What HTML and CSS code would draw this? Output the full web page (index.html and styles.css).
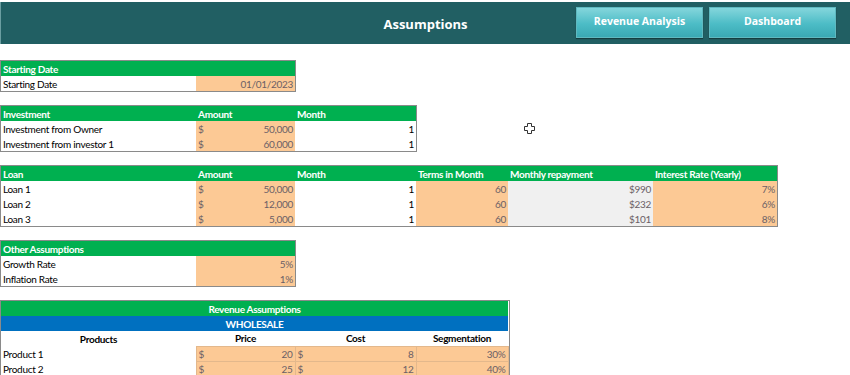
FILE: index.html
```html
<!DOCTYPE html>
<html lang="en">
<head>
  <meta charset="UTF-8" />
  <title>Assumptions</title>
  <link rel="stylesheet" href="styles.css">
</head>
<body>
  <header class="topbar">
    <div class="topbar-spacer"></div>
    <h1 class="title">Assumptions</h1>
    <nav class="nav">
      <a class="nav-btn" href="#">Revenue Analysis</a>
      <a class="nav-btn" href="#">Dashboard</a>
    </nav>
  </header>

  <main class="sheet">
    <!-- Starting date -->
    <table class="grid w-295">
      <colgroup><col class="c-label"><col class="c-amount"></colgroup>
      <tr class="head"><th colspan="2">Starting Date</th></tr>
      <tr><td>Starting Date</td><td class="input num">01/01/2023</td></tr>
    </table>

    <!-- Investment -->
    <table class="grid w-416">
      <colgroup><col class="c-label"><col class="c-amount"><col class="c-month"></colgroup>
      <tr class="head"><th>Investment</th><th>Amount</th><th>Month</th></tr>
      <tr><td>Investment from Owner</td><td class="input"><span class="acc"><span>$</span><span>50,000</span></span></td><td class="num">1</td></tr>
      <tr><td>Investment from investor 1</td><td class="input"><span class="acc"><span>$</span><span>60,000</span></span></td><td class="num">1</td></tr>
    </table>

    <!-- Loan -->
    <table class="grid w-777">
      <colgroup><col class="c-label"><col class="c-amount"><col class="c-month"><col class="c-terms"><col class="c-repay"><col class="c-rate"></colgroup>
      <tr class="head"><th>Loan</th><th>Amount</th><th>Month</th><th>Terms in Month</th><th>Monthly repayment</th><th>Interest Rate (Yearly)</th></tr>
      <tr><td>Loan 1</td><td class="input"><span class="acc"><span>$</span><span>50,000</span></span></td><td class="num">1</td><td class="input num">60</td><td class="calc num">$990</td><td class="input num">7%</td></tr>
      <tr><td>Loan 2</td><td class="input"><span class="acc"><span>$</span><span>12,000</span></span></td><td class="num">1</td><td class="input num">60</td><td class="calc num">$232</td><td class="input num">6%</td></tr>
      <tr><td>Loan 3</td><td class="input"><span class="acc"><span>$</span><span>5,000</span></span></td><td class="num">1</td><td class="input num">60</td><td class="calc num">$101</td><td class="input num">8%</td></tr>
    </table>

    <!-- Other assumptions -->
    <table class="grid w-295">
      <colgroup><col class="c-label"><col class="c-amount"></colgroup>
      <tr class="head"><th colspan="2">Other Assumptions</th></tr>
      <tr><td>Growth Rate</td><td class="input num">5%</td></tr>
      <tr><td>Inflation Rate</td><td class="input num">1%</td></tr>
    </table>

    <!-- Revenue assumptions -->
    <table class="grid w-508 revenue">
      <colgroup><col class="c-label"><col class="c-amount"><col class="c-month"><col class="c-terms"></colgroup>
      <tr class="head center"><th colspan="4">Revenue Assumptions</th></tr>
      <tr class="band"><th colspan="4">WHOLESALE</th></tr>
      <tr class="subhead"><th>Products</th><th>Price</th><th>Cost</th><th>Segmentation</th></tr>
      <tr><td>Product 1</td><td class="input"><span class="acc"><span>$</span><span>20</span></span></td><td class="input"><span class="acc"><span>$</span><span>8</span></span></td><td class="input num">30%</td></tr>
      <tr><td>Product 2</td><td class="input"><span class="acc"><span>$</span><span>25</span></span></td><td class="input"><span class="acc"><span>$</span><span>12</span></span></td><td class="input num">40%</td></tr>
    </table>

    <!-- excel cell cursor -->
    <svg class="cell-cursor" width="11" height="11" viewBox="0 0 11 11">
      <path d="M3.5 0.5h4v3h3v4h-3v3h-4v-3h-3v-4h3z" fill="#fff" stroke="#333" stroke-width="1"/>
    </svg>
  </main>
</body>
</html>
```

FILE: styles.css
```css
* {
  margin: 0;
  padding: 0;
  box-sizing: border-box;
}
html, body {
  background: #fff;
  font-family: Lato, 'Noto Sans', sans-serif;
}
body {
  width: 850px;
  height: 375px;
  overflow: hidden;
}

/* top bar */
.topbar {
  margin-top: 2px;
  height: 42px;
  background: #215f63;
  border-left: 1px solid #6b9ea1;
  display: grid;
  grid-template-columns: 1fr auto 1fr;
  align-items: center;
}
.title {
  color: #fff;
  font-family: 'Open Sans', sans-serif;
  font-size: 13px;
  font-weight: 700;
  padding-top: 1px;
}
.nav {
  display: flex;
  justify-content: flex-end;
  gap: 6px;
  padding-right: 14px;
  align-self: start;
  padding-top: 5px;
}
.nav-btn {
  width: 127px;
  height: 31px;
  display: flex;
  align-items: center;
  justify-content: center;
  color: #fff;
  font-family: 'Open Sans', sans-serif;
  font-size: 10.5px;
  font-weight: 700;
  text-decoration: none;
  padding-bottom: 3px;
  background: linear-gradient(#84d6dc, #4cbcc6 55%, #3aa9b4);
  border: 1px solid #5fb9c0;
  box-shadow: 0 1px 1px rgba(0, 0, 0, 0.35);
}

/* sheet */
.sheet {
  position: relative;
  padding: 17px 0 0 1px;
  display: flex;
  flex-direction: column;
  align-items: flex-start;
  gap: 15px;
}
.grid {
  border-collapse: collapse;
  table-layout: fixed;
  box-shadow: 0 0 0 1px #8a8a8a;
  font-size: 10px;
  letter-spacing: -0.3px;
  color: #000;
}
.w-295 { width: 294px; }
.w-416 { width: 415px; }
.w-508 { width: 507px; }
.w-777 { width: 776px; }
.c-label { width: 195px; }
.c-amount { width: 99px; }
.c-month { width: 121px; }
.c-terms { width: 92px; }
.c-repay { width: 145px; }
.c-rate { width: 124px; }

.grid th, .grid td {
  height: 15px;
  padding: 0 2px;
  line-height: 12px;
  white-space: nowrap;
  overflow: hidden;
  text-align: left;
  font-weight: 400;
}
.grid .head th {
  background: #00b050;
  color: #fff;
  font-weight: 700;
}
.grid .head.center th,
.grid .band th,
.grid .subhead th {
  text-align: center;
}
.grid .band th {
  background: #0070c0;
  color: #fff;
  font-weight: 700;
}
.grid .subhead th {
  font-weight: 700;
}
.num { text-align: right !important; }
.input {
  background: #fcc995;
  color: #6b5f66;
}
.calc {
  background: #f0f0f0;
  color: #6b5f66;
}
.acc {
  display: flex;
  justify-content: space-between;
}
.revenue td.input {
  border: 1px solid #e3b88c;
}
.revenue td:first-child {
  border-right: 1px solid #e3b88c;
}

.cell-cursor {
  position: absolute;
  left: 524px;
  top: 79px;
}
```
